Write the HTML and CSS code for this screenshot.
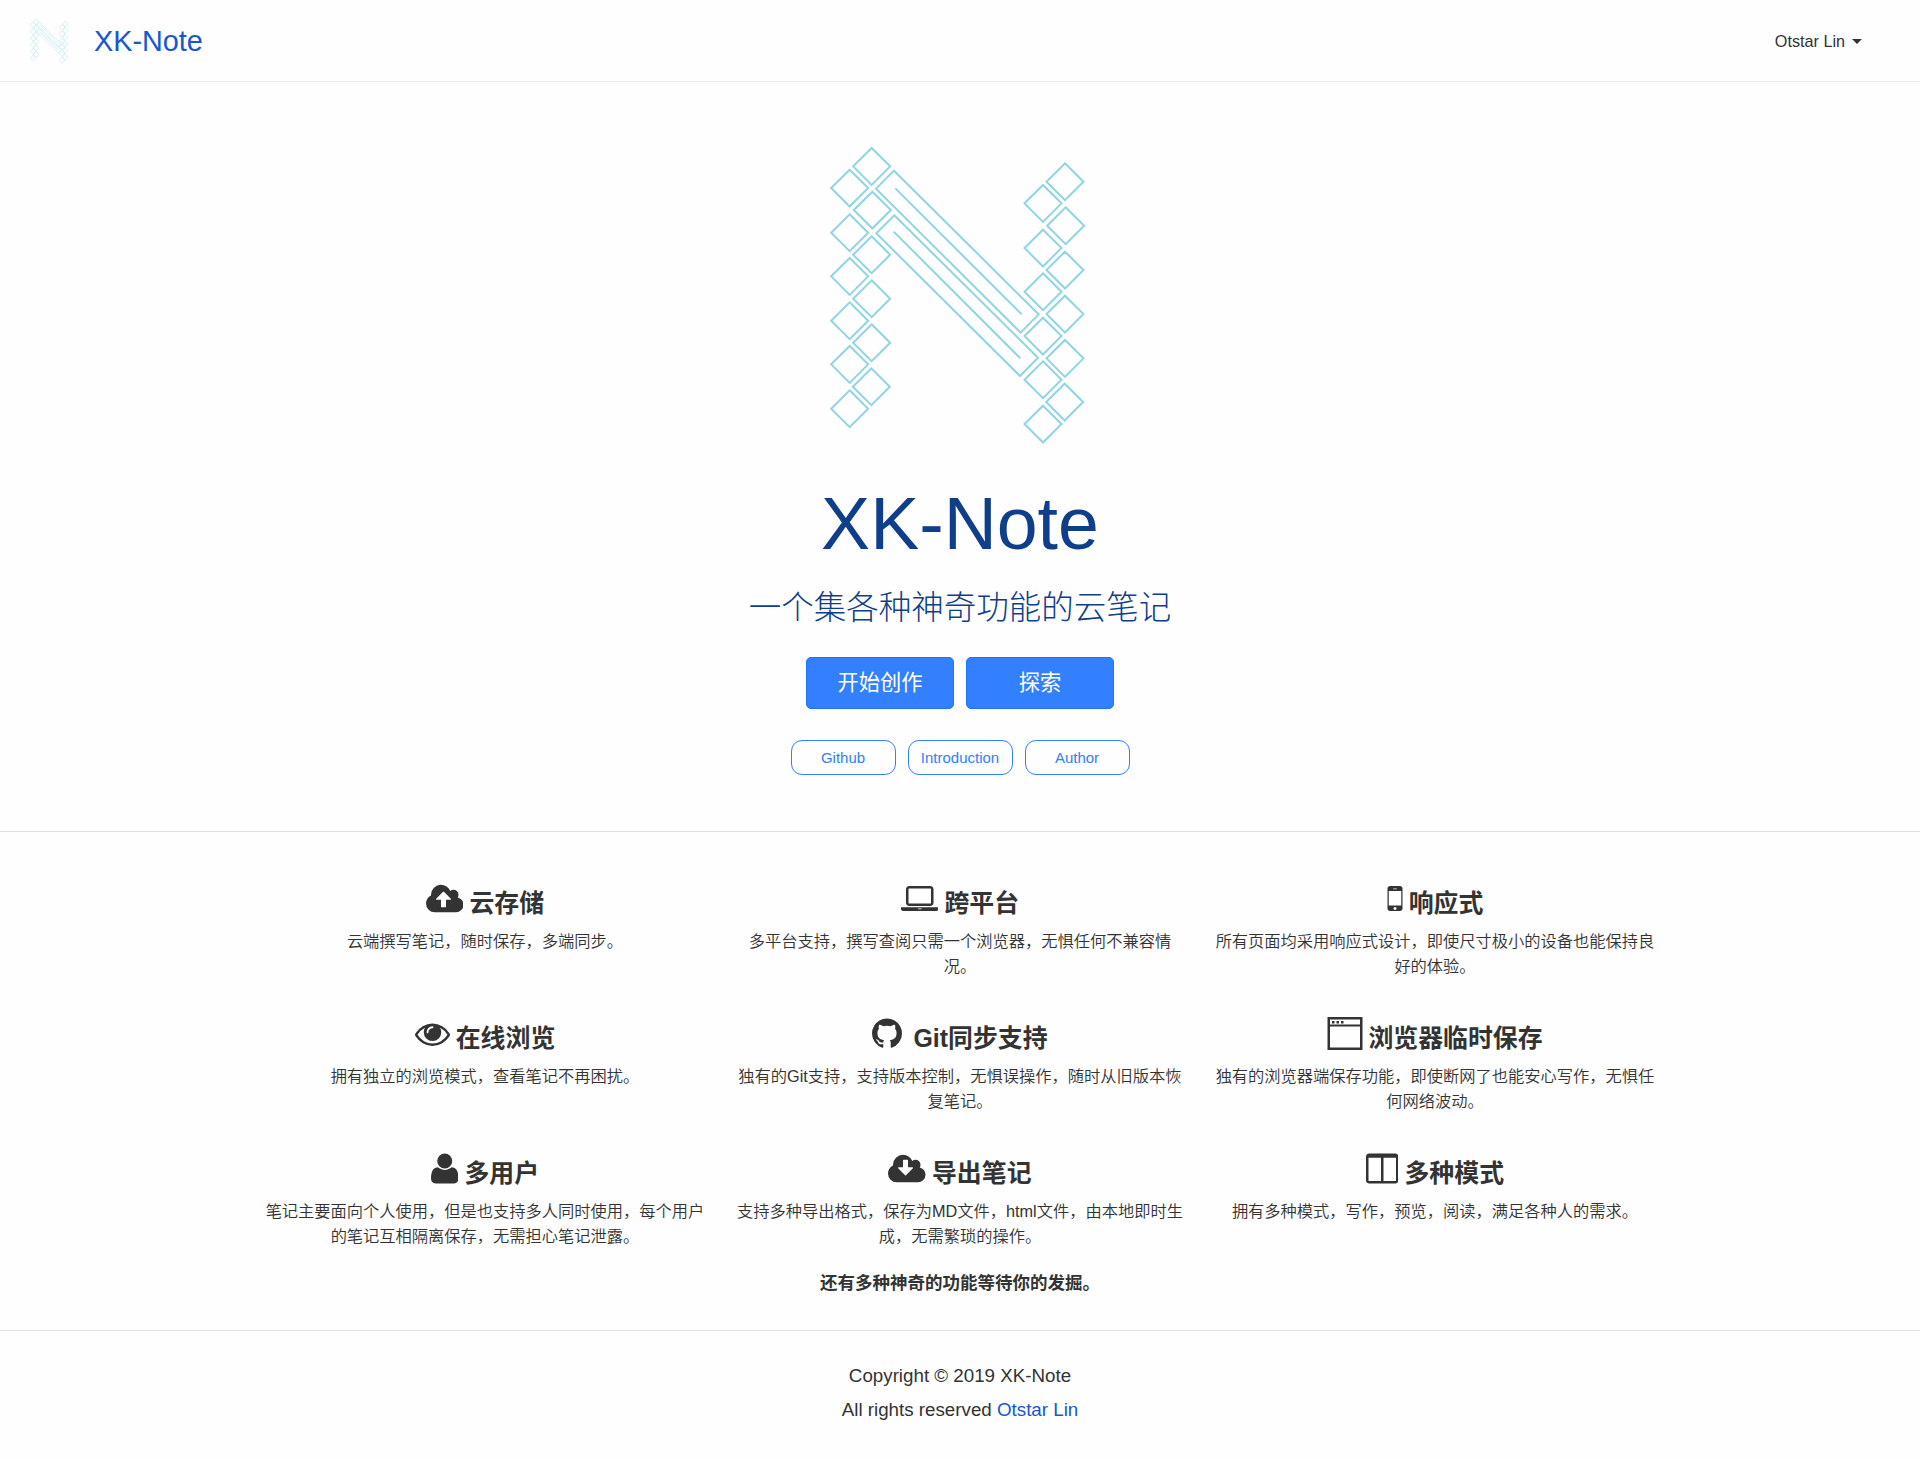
FILE: index.html
```html
<!DOCTYPE html>
<html lang="zh-CN">
<head>
<meta charset="utf-8">
<title>XK-Note</title>
<link rel="stylesheet" href="styles.css">
</head>
<body>
<svg class="defs" aria-hidden="true">
  <defs>
    <path id="d" d="M0-55L55.500 0L0 55.500L-55.500 0Z"/>
    <symbol id="logo" viewBox="0 0 900 990">
      <g fill="none" stroke="currentColor">
        <use href="#d" x="185" y="109"/><use href="#d" x="119" y="174"/>
        <use href="#d" x="187" y="240"/><use href="#d" x="119" y="308"/>
        <use href="#d" x="185" y="374"/><use href="#d" x="119" y="439"/>
        <use href="#d" x="185" y="506"/><use href="#d" x="119" y="572"/>
        <use href="#d" x="185" y="638"/><use href="#d" x="119" y="703"/>
        <use href="#d" x="184" y="770"/><use href="#d" x="119" y="836"/>
        <use href="#d" x="765" y="155"/><use href="#d" x="699" y="220"/>
        <use href="#d" x="767" y="287"/><use href="#d" x="699" y="354"/>
        <use href="#d" x="765" y="420"/><use href="#d" x="699" y="485"/>
        <use href="#d" x="765" y="552"/><use href="#d" x="699" y="618"/>
        <use href="#d" x="765" y="685"/><use href="#d" x="699" y="749"/>
        <use href="#d" x="764" y="816"/><use href="#d" x="699" y="882"/>
        <path d="M252 122L686 553L632 608L198 176ZM256 175L635 553M253 256L684 683L630 738L199 310ZM251 305L631 685"/>
      </g>
    </symbol>
  </defs>
</svg>

<header class="navbar">
  <a class="brand"><svg class="brand-logo"><use href="#logo"/></svg><span>XK-Note</span></a>
  <a class="user">Otstar Lin<i class="caret"></i></a>
</header>

<section class="hero">
  <svg class="hero-logo"><use href="#logo"/></svg>
  <h1>XK-Note</h1>
  <p class="tagline">一个集各种神奇功能的云笔记</p>
  <div class="actions"><a class="btn">开始创作</a><a class="btn">探索</a></div>
  <div class="links"><a class="pill">Github</a><a class="pill">Introduction</a><a class="pill">Author</a></div>
</section>

<section class="features">
  <div class="grid">
    <article>
      <h2><svg width="37.500" height="35" viewBox="0 0 1920 1792"><path d="M1280 928q0-14-9-23l-352-352q-9-9-23-9t-23 9l-351 351q-10 12-10 24 0 14 9 23t23 9h224v352q0 13 9.500 22.500t22.500 9.500h192q13 0 22.500-9.500t9.500-22.500v-352h224q13 0 22.500-9.500t9.500-22.500zm640 288q0 159-112.500 271.500t-271.500 112.500h-1088q-185 0-316.500-131.500t-131.500-316.500q0-130 70-240t188-165q-2-30-2-43 0-212 150-362t362-150q156 0 285.500 87t188.500 231q71-62 166-62 106 0 181 75t75 181q0 76-41 138 130 31 213.500 135.500t83.500 238.500z"/></svg><span>云存储</span></h2>
      <p>云端撰写笔记，随时保存，多端同步。</p>
    </article>
    <article>
      <h2><svg width="37.500" height="35" viewBox="0 0 1920 1792"><path d="M416 1280q-66 0-113-47t-47-113v-704q0-66 47-113t113-47h1088q66 0 113 47t47 113v704q0 66-47 113t-113 47h-1088zm-32-864v704q0 13 9.500 22.500t22.500 9.500h1088q13 0 22.500-9.500t9.500-22.500v-704q0-13-9.500-22.500t-22.500-9.500h-1088q-13 0-22.500 9.500t-9.500 22.500zm1376 928h160v96q0 40-47 68t-113 28h-1600q-66 0-113-28t-47-68v-96h1760zm-720 96q16 0 16-16t-16-16h-160q-16 0-16 16t16 16h160z"/></svg><span>跨平台</span></h2>
      <p>多平台支持，撰写查阅只需一个浏览器，无惧任何不兼容情况。</p>
    </article>
    <article>
      <h2><svg width="16" height="35" viewBox="486 0 819 1792"><path d="M976 1408q0-33-23.500-56.500t-56.500-23.500-56.500 23.500-23.500 56.500 23.500 56.500 56.500 23.500 56.500-23.500 23.500-56.500zm240-160v-736h-640v736zm-224-848q0-16-16-16h-160q-16 0-16 16t16 16h160q16 0 16-16zm288-16v1024q0 52-38 90t-90 38h-512q-52 0-90-38t-38-90v-1024q0-52 38-90t90-38h512q52 0 90 38t38 90z"/></svg><span>响应式</span></h2>
      <p>所有页面均采用响应式设计，即使尺寸极小的设备也能保持良好的体验。</p>
    </article>
    <article>
      <h2><svg width="35" height="35" viewBox="0 0 1792 1792"><path d="M1664 960q-152-236-381-353 61 104 61 225 0 185-131.500 316.500t-316.500 131.500-316.500-131.500-131.500-316.500q0-121 61-225-229 117-381 353 133 205 333.500 326.500t434.500 121.500 434.500-121.500 333.500-326.500zm-720-384q0-20-14-34t-34-14q-125 0-214.500 89.500t-89.500 214.500q0 20 14 34t34 14 34-14 14-34q0-86 61-147t147-61q20 0 34-14t14-34zm848 384q0 34-20 69-140 230-376.500 368.500t-499.500 138.500-499.500-139-376.500-368q-20-35-20-69t20-69q140-229 376.500-368t499.500-139 499.500 139 376.500 368q20 35 20 69z"/></svg><span>在线浏览</span></h2>
      <p>拥有独立的浏览模式，查看笔记不再困扰。</p>
    </article>
    <article>
      <h2 class="wide"><svg width="30" height="35" viewBox="128 0 1536 1792"><path d="M896 128q209 0 385.500 103t279.500 279.500 103 385.500q0 251-146.500 451.500t-378.500 277.500q-27 5-40-7t-13-30q0-3 .5-76.500t.5-134.500q0-97-52-142 57-6 102.500-18t94-39 81-66.500 53-105 20.500-150.500q0-119-79-206 37-91-8-204-28-9-81 11t-92 44l-38 24q-93-26-192-26t-192 26q-16-11-42.500-27t-83.500-38.500-85-13.500q-45 113-8 204-79 87-79 206 0 85 20.500 150t52.500 105 80.500 67 94 39 102.500 18q-39 36-49 103-21 10-45 15t-57 5-65.500-21.500-55.500-62.500q-19-32-48.500-52t-49.500-24l-20-3q-21 0-29 4.500t-5 11.500 9 14 13 12l7 5q22 10 43.500 38t31.500 51l10 23q13 38 44 61.500t67 30 69.500 7 55.500-3.500l23-4q0 38 .5 88.500t.5 54.500q0 18-13 30t-40 7q-232-77-378.500-277.500t-146.500-451.500q0-209 103-385.500t279.500-279.500 385.500-103z"/></svg><span>Git同步支持</span></h2>
      <p>独有的Git支持，支持版本控制，无惧误操作，随时从旧版本恢复笔记。</p>
    </article>
    <article>
      <h2 class="tight"><svg width="36" height="35" viewBox="0 0 36 35"><path fill-rule="evenodd" d="M.5 1h35v33H.5zM3 3.500v5h30v-5zM3 10.500v21h30v-21z"/><path d="M5 5h2.500v2.500H5zM9.500 5H12v2.500H9.500zM14 5h2.500v2.500H14z"/></svg><span>浏览器临时保存</span></h2>
      <p>独有的浏览器端保存功能，即使断网了也能安心写作，无惧任何网络波动。</p>
    </article>
    <article>
      <h2><svg width="27.500" height="35" viewBox="192 0 1408 1792"><path d="M1600 1405q0 120-73 189.500t-194 69.500h-874q-121 0-194-69.500t-73-189.500q0-53 3.500-103.500t14-109 26.500-108.500 43-97.500 62-81 85.500-53.500 111.500-20q9 0 42 21.500t74.500 48 108 48 133.500 21.500 133.500-21.500 108-48 74.500-48 42-21.500q61 0 111.500 20t85.500 53.500 62 81 43 97.500 26.500 108.500 14 109 3.500 103.500zm-320-893q0 159-112.500 271.500t-271.500 112.500-271.500-112.500-112.500-271.500 112.500-271.500 271.500-112.500 271.500 112.500 112.500 271.500z"/></svg><span>多用户</span></h2>
      <p>笔记主要面向个人使用，但是也支持多人同时使用，每个用户的笔记互相隔离保存，无需担心笔记泄露。</p>
    </article>
    <article>
      <h2><svg width="37.500" height="35" viewBox="0 0 1920 1792"><path d="M1280 864q0-14-9-23t-23-9h-224v-352q0-13-9.500-22.500t-22.500-9.500h-192q-13 0-22.500 9.500t-9.500 22.500v352h-224q-13 0-22.500 9.500t-9.500 22.500q0 14 9 23l352 352q9 9 23 9t23-9l351-351q10-12 10-24zm640 352q0 159-112.500 271.500t-271.500 112.500h-1088q-185 0-316.500-131.500t-131.500-316.500q0-130 70-240t188-165q-2-30-2-43 0-212 150-362t362-150q156 0 285.500 87t188.500 231q71-62 166-62 106 0 181 75t75 181q0 76-41 138 130 31 213.500 135.500t83.500 238.500z"/></svg><span>导出笔记</span></h2>
      <p>支持多种导出格式，保存为MD文件，html文件，由本地即时生成，无需繁琐的操作。</p>
    </article>
    <article>
      <h2><svg width="32.500" height="35" viewBox="64 0 1664 1792"><path d="M224 1536h608v-1192h-640v1160q0 13 9.500 22.500t22.500 9.500zm1376-32v-1160h-640v1192h608q13 0 22.500-9.500t9.500-22.500zm128-1216v1216q0 66-47 113t-113 47h-1344q-66 0-113-47t-47-113v-1216q0-66 47-113t113-47h1344q66 0 113 47t47 113z"/></svg><span>多种模式</span></h2>
      <p>拥有多种模式，写作，预览，阅读，满足各种人的需求。</p>
    </article>
  </div>
  <p class="more">还有多种神奇的功能等待你的发掘。</p>
</section>

<footer>
  <p>Copyright © 2019 XK-Note</p>
  <p>All rights reserved <a>Otstar Lin</a></p>
</footer>
</body>
</html>
```
FILE: styles.css
```css
* { box-sizing: border-box; }
body {
  margin: 0;
  background: #fefefe;
  color: #333;
  font-family: "Liberation Sans", "Noto Sans CJK SC", sans-serif;
  font-size: 16px;
}
h1, h2, p { margin: 0; }
.defs { position: absolute; width: 0; height: 0; }

.navbar {
  display: flex;
  align-items: center;
  justify-content: space-between;
  height: 82px;
  padding: 1px 58px 0 27px;
  border-bottom: 1px solid #ececec;
}
.brand { display: flex; align-items: center; color: #1558d0; font-size: 28.800px; }
.brand-logo { width: 45px; height: 50px; margin-right: 22px; color: #8fd5e2; stroke-width: 7px; }
.user { display: flex; align-items: center; font-size: 16.200px; }
.caret { margin-left: 7px; border: 5px solid transparent; border-top-color: #333; border-bottom: 0; }

.hero {
  display: flex;
  flex-direction: column;
  align-items: center;
  height: 750px;
  padding-top: 48px;
  border-bottom: 1px solid #dfdfdf;
}
.hero-logo { width: 300px; height: 330px; color: #8fd5e2; stroke-width: 6px; }
h1 { margin-top: 21px; font-size: 73.500px; font-weight: 400; line-height: 86px; color: #0f3e8a; }
.tagline { margin-top: 16px; font-size: 32.500px; font-weight: 300; line-height: 50px; color: #0f3e8a; }
.actions { display: flex; gap: 12px; margin-top: 24px; }
.btn {
  width: 148px;
  border: 1px solid #1f74f5;
  border-radius: 5px;
  background: #3380ff;
  color: #fff;
  font-size: 21.250px;
  line-height: 50px;
  text-align: center;
}
.links { display: flex; gap: 12px; margin-top: 31px; }
.pill {
  width: 105px;
  border: 1px solid #3380ff;
  border-radius: 11px;
  color: #3380ff;
  font-size: 15px;
  line-height: 33px;
  text-align: center;
}

.features { height: 499px; padding-top: 49px; border-bottom: 1px solid #dfdfdf; }
.grid {
  display: grid;
  grid-template-columns: repeat(3, 475px);
  grid-auto-rows: 135px;
  justify-content: center;
}
.grid article { padding: 0 12px; text-align: center; }
h2 {
  display: flex;
  justify-content: center;
  gap: 6px;
  height: 47.500px;
  font-size: 24.900px;
  line-height: 45px;
}
h2.wide { gap: 11px; }
h2.tight { gap: 5px; }
h2 svg { flex: none; fill: #333; }
.grid p { font-size: 16.250px; font-weight: 350; line-height: 25px; }
.more { font-size: 17.500px; font-weight: 700; line-height: 28px; text-align: center; margin-top: -17px; }

footer { padding-top: 28px; font-size: 18.750px; line-height: 34px; text-align: center; }
footer a { color: #1558d0; }
```
